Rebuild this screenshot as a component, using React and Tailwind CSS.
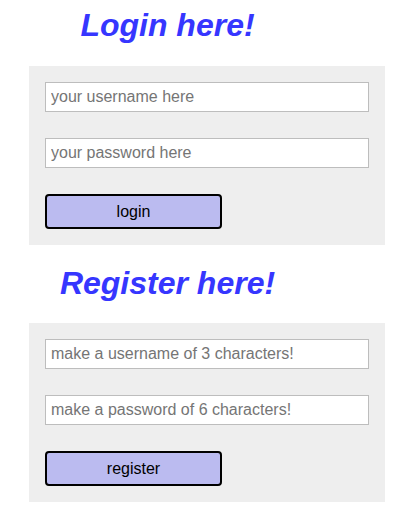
export default function App() {
  return (
    <main className="min-h-screen bg-white font-['Liberation_Sans',Arial,sans-serif]">
      <h1 className="w-[335px] pt-[7px] pb-[22px] text-center text-[32px] leading-[37px] font-bold italic text-[#3636ff]">
        Login here!
      </h1>
      <form className="ml-[29px] flex w-[356px] flex-col gap-[26px] bg-[#eeeeee] p-4">
        <input
          type="text"
          placeholder="your username here"
          className="h-[30px] w-[324px] border border-[#bdbdbd] bg-white px-[5px] text-base text-black placeholder:text-[#757575] outline-none"
        />
        <input
          type="password"
          placeholder="your password here"
          className="h-[30px] w-[324px] border border-[#bdbdbd] bg-white px-[5px] text-base text-black placeholder:text-[#757575] outline-none"
        />
        <button
          type="button"
          className="h-[35px] w-[177px] rounded-[4px] border-2 border-black bg-[#bbbbf0] text-base text-black"
        >
          login
        </button>
      </form>

      <h1 className="w-[335px] pt-[20px] pb-[21px] text-center text-[32px] leading-[37px] font-bold italic text-[#3636ff]">
        Register here!
      </h1>
      <form className="ml-[29px] flex w-[356px] flex-col gap-[26px] bg-[#eeeeee] p-4">
        <input
          type="text"
          placeholder="make a username of 3 characters!"
          className="h-[30px] w-[324px] border border-[#bdbdbd] bg-white px-[5px] text-base text-black placeholder:text-[#757575] outline-none"
        />
        <input
          type="password"
          placeholder="make a password of 6 characters!"
          className="h-[30px] w-[324px] border border-[#bdbdbd] bg-white px-[5px] text-base text-black placeholder:text-[#757575] outline-none"
        />
        <button
          type="button"
          className="h-[35px] w-[177px] rounded-[4px] border-2 border-black bg-[#bbbbf0] text-base text-black"
        >
          register
        </button>
      </form>
    </main>
  );
}
